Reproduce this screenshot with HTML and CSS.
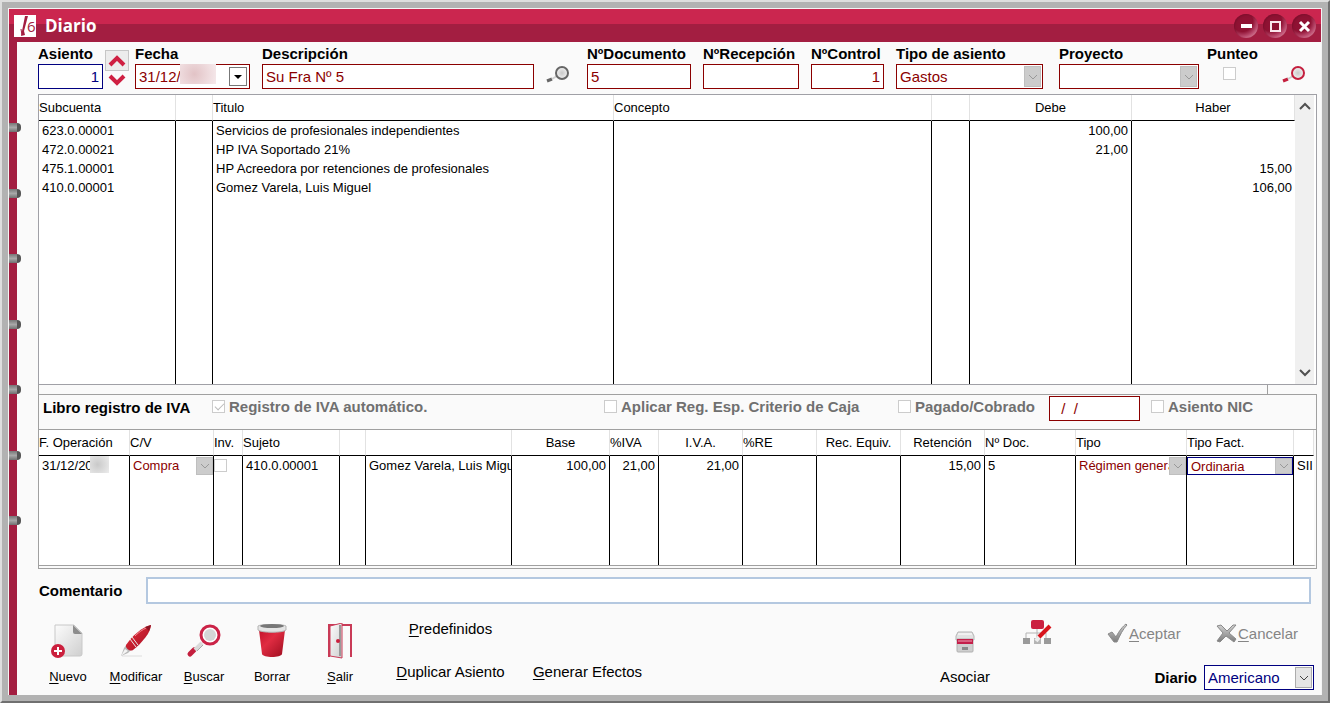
FILE: index.html
```html
<!DOCTYPE html>
<html lang="es">
<head>
    <meta charset="UTF-8">
    <meta name="viewport" content="width=device-width, initial-scale=1.0">
    <title>Diario</title>
    <link rel="stylesheet" href="styles.css">
</head>
<body>
    <!-- shared shapes -->
    <svg class="defs" width="0" height="0" aria-hidden="true">
        <defs>
            <linearGradient id="redGrad" x1="0" y1="0" x2="1" y2="1">
                <stop offset="0" stop-color="#e8303c"/>
                <stop offset="1" stop-color="#a30d22"/>
            </linearGradient>
            <linearGradient id="paperGrad" x1="0" y1="0" x2="1" y2="1">
                <stop offset="0" stop-color="#fcfcfc"/>
                <stop offset="1" stop-color="#cfcfcf"/>
            </linearGradient>
            <linearGradient id="binGrad" x1="0" y1="0" x2="1" y2="1">
                <stop offset="0" stop-color="#c2122a"/>
                <stop offset="0.4" stop-color="#e02c42"/>
                <stop offset="1" stop-color="#9c0c1e"/>
            </linearGradient>
            <linearGradient id="metalGrad" x1="0" y1="0" x2="0" y2="1">
                <stop offset="0" stop-color="#d0d0d0"/>
                <stop offset="1" stop-color="#7c7c7c"/>
            </linearGradient>
            <radialGradient id="lensGrad">
                <stop offset="0" stop-color="#c9c9c9"/>
                <stop offset="1" stop-color="#f2f2f2"/>
            </radialGradient>
            <symbol id="chevron" viewBox="0 0 10 6">
                <path d="M1 1l4 4 4-4" fill="none" stroke="currentColor"/>
            </symbol>
            <symbol id="lens" viewBox="0 0 24 20">
                <path d="M1 16l5-2" stroke="currentColor" stroke-width="3"/>
                <path d="M6 14l5-3" stroke="#cfcfcf" stroke-width="2"/>
                <circle cx="16" cy="8" r="6" fill="url(#lensGrad)" stroke="currentColor" stroke-width="2"/>
            </symbol>
        </defs>
    </svg>

    <div class="frame">
        <div class="window">
            <header class="titlebar">
                <svg class="logo" viewBox="0 0 22 22">
                    <rect width="22" height="22" fill="#fff"/>
                    <path d="M11 1h3L10 16l1 4-4 1 1-5z" fill="#a31e41"/>
                    <path d="M7 14l1 6" stroke="#a31e41"/>
                    <text x="13" y="17" class="logo-text">6</text>
                </svg>
                <h1>Diario</h1>
                <div class="window-buttons">
                    <button type="button" aria-label="Minimizar"><svg viewBox="0 0 24 24"><path d="M7 12h11" stroke="#fff" stroke-width="4"/></svg></button>
                    <button type="button" aria-label="Maximizar"><svg viewBox="0 0 24 24"><rect x="8" y="8" width="9" height="9" fill="none" stroke="#fbe6ec" stroke-width="2"/></svg></button>
                    <button type="button" aria-label="Cerrar"><svg viewBox="0 0 24 24"><path d="M8 8l9 9M17 8l-9 9" stroke="#fff" stroke-width="3"/></svg></button>
                </div>
            </header>

            <div class="body">
                <div class="rail">
                    <i></i><i></i><i></i><i></i><i></i><i></i><i></i>
                </div>

                <main class="content">
                    <div class="fields">
                        <div class="group">
                            <div class="number">
                                <div class="field w-asiento">
                                    <label for="asiento">Asiento</label>
                                    <input class="box blue right" id="asiento" type="text" value="1">
                                </div>
                                <div class="spin">
                                    <button type="button" class="up" aria-label="Siguiente"><svg viewBox="0 0 18 14"><path d="M2 11l7-7 7 7" fill="none" stroke="#cf2042" stroke-width="4"/></svg></button>
                                    <button type="button" aria-label="Anterior"><svg viewBox="0 0 18 14"><path d="M2 3l7 7 7-7" fill="none" stroke="#cf2042" stroke-width="4"/></svg></button>
                                </div>
                            </div>
                            <div class="field w-fecha">
                                <label for="fecha">Fecha</label>
                                <div class="date">
                                    <input class="box" id="fecha" type="text" value="31/12/">
                                    <span class="smudge pink"></span>
                                    <button type="button" aria-label="Calendario"><svg viewBox="0 0 8 4"><path d="M0 0h8l-4 4z"/></svg></button>
                                </div>
                            </div>
                        </div>
                        <div class="field grow">
                            <label for="descripcion">Descripción</label>
                            <input class="box" id="descripcion" type="text" value="Su Fra Nº 5">
                        </div>
                        <button type="button" class="lens-button" aria-label="Buscar descripción"><svg class="lens"><use href="#lens"/></svg></button>
                        <div class="field w-documento">
                            <label for="documento">NºDocumento</label>
                            <input class="box" id="documento" type="text" value="5">
                        </div>
                        <div class="field w-recepcion">
                            <label for="recepcion">NºRecepción</label>
                            <input class="box" id="recepcion" type="text">
                        </div>
                        <div class="field w-control">
                            <label for="control">NºControl</label>
                            <input class="box right" id="control" type="text" value="1">
                        </div>
                        <div class="field w-tipo">
                            <label for="tipo">Tipo de asiento</label>
                            <div class="combo">
                                <select class="box" id="tipo" disabled><option>Gastos</option></select>
                                <span class="arrow"><svg><use href="#chevron"/></svg></span>
                            </div>
                        </div>
                        <div class="group project">
                            <div class="field w-proyecto">
                                <label for="proyecto">Proyecto</label>
                                <div class="combo">
                                    <select class="box" id="proyecto" disabled><option></option></select>
                                    <span class="arrow"><svg><use href="#chevron"/></svg></span>
                                </div>
                            </div>
                            <div class="field w-punteo">
                                <label for="punteo">Punteo</label>
                                <input id="punteo" type="checkbox" disabled>
                            </div>
                        </div>
                        <button type="button" class="lens-button red" aria-label="Buscar asiento"><svg class="lens"><use href="#lens"/></svg></button>
                    </div>

                    <section class="entries">
                        <table class="grid">
                            <colgroup>
                                <col class="c137"><col class="c37"><col class="c401"><col><col class="c38"><col class="c162"><col class="c163">
                            </colgroup>
                            <thead>
                                <tr><th>Subcuenta</th><th></th><th>Titulo</th><th>Concepto</th><th></th><th class="center">Debe</th><th class="center">Haber</th></tr>
                            </thead>
                            <tbody>
                                <tr><td>623.0.00001</td><td></td><td>Servicios de profesionales independientes</td><td></td><td></td><td class="right">100,00</td><td></td></tr>
                                <tr><td>472.0.00021</td><td></td><td>HP IVA Soportado 21%</td><td></td><td></td><td class="right">21,00</td><td></td></tr>
                                <tr><td>475.1.00001</td><td></td><td>HP Acreedora por retenciones de profesionales</td><td></td><td></td><td></td><td class="right">15,00</td></tr>
                                <tr><td>410.0.00001</td><td></td><td>Gomez Varela, Luis Miguel</td><td></td><td></td><td></td><td class="right">106,00</td></tr>
                                <tr class="filler"><td></td><td></td><td></td><td></td><td></td><td></td><td></td></tr>
                            </tbody>
                        </table>
                        <div class="scrollbar">
                            <button type="button" aria-label="Subir"><svg viewBox="0 0 12 8"><path d="M1 7l5-5 5 5" fill="none" stroke="#505050" stroke-width="2"/></svg></button>
                            <button type="button" aria-label="Bajar"><svg viewBox="0 0 12 8"><path d="M1 1l5 5 5-5" fill="none" stroke="#505050" stroke-width="2"/></svg></button>
                        </div>
                    </section>
                    <div class="strip"></div>

                    <section class="vat">
                        <div class="vat-head">
                            <h2>Libro registro de IVA</h2>
                            <label><input type="checkbox" checked disabled>Registro de IVA automático.</label>
                            <label><input type="checkbox" disabled>Aplicar Reg. Esp. Criterio de Caja</label>
                            <label><input type="checkbox" disabled>Pagado/Cobrado</label>
                            <input class="box pay-date" type="text" value="  /  /" aria-label="Fecha de pago">
                            <label><input type="checkbox" disabled>Asiento NIC</label>
                        </div>
                        <table class="grid">
                            <colgroup>
                                <col class="c91"><col class="c84"><col class="c29"><col class="c97"><col class="c26"><col><col class="c98"><col class="c49"><col class="c84"><col class="c74"><col class="c84"><col class="c84"><col class="c91"><col class="c111"><col class="c107"><col class="c20">
                            </colgroup>
                            <thead>
                                <tr><th>F. Operación</th><th>C/V</th><th>Inv.</th><th>Sujeto</th><th></th><th></th><th class="center">Base</th><th>%IVA</th><th class="center">I.V.A.</th><th>%RE</th><th class="center">Rec. Equiv.</th><th class="center">Retención</th><th>Nº Doc.</th><th>Tipo</th><th>Tipo Fact.</th><th></th></tr>
                            </thead>
                            <tbody>
                                <tr>
                                    <td class="date-cell">31/12/20<span class="smudge"></span></td>
                                    <td class="control"><div class="combo"><select disabled aria-label="C/V"><option>Compra</option></select><span class="arrow"><svg><use href="#chevron"/></svg></span></div></td>
                                    <td class="control"><input type="checkbox" disabled aria-label="Inv."></td>
                                    <td>410.0.00001</td>
                                    <td></td>
                                    <td>Gomez Varela, Luis Miguel</td>
                                    <td class="right">100,00</td>
                                    <td class="right">21,00</td>
                                    <td class="right">21,00</td>
                                    <td></td>
                                    <td></td>
                                    <td class="right">15,00</td>
                                    <td>5</td>
                                    <td class="control"><div class="combo"><select disabled aria-label="Tipo"><option>Régimen general</option></select><span class="arrow"><svg><use href="#chevron"/></svg></span></div></td>
                                    <td class="control"><div class="combo focused"><select disabled aria-label="Tipo Fact."><option>Ordinaria</option></select><span class="arrow"><svg><use href="#chevron"/></svg></span></div></td>
                                    <td>SII</td>
                                </tr>
                                <tr class="filler"><td></td><td></td><td></td><td></td><td></td><td></td><td></td><td></td><td></td><td></td><td></td><td></td><td></td><td></td><td></td><td></td></tr>
                            </tbody>
                        </table>
                    </section>

                    <div class="comment">
                        <label for="comentario">Comentario</label>
                        <input id="comentario" type="text">
                    </div>

                    <footer class="footer">
                        <div class="tools">
                            <button type="button">
                                <svg viewBox="0 0 36 36">
                                    <path d="M5 2h19l8 8v21a2 2 0 0 1-2 2H7a2 2 0 0 1-2-2V4z" fill="url(#paperGrad)" stroke="#c8c8c8"/>
                                    <path d="M23 2l9 9h-7a2 2 0 0 1-2-2z" fill="#8c8c8c"/>
                                    <circle cx="8" cy="28" r="7" fill="#cb1f3d"/>
                                    <path d="M8 24v8M4 28h8" stroke="#fff" stroke-width="2"/>
                                </svg>
                                <span><u>N</u>uevo</span>
                            </button>
                            <button type="button">
                                <svg viewBox="0 0 36 36">
                                    <path d="M4 33h20" stroke="#dedede"/>
                                    <path d="M3 33l3-8 3-4 5 5-4 4z" fill="#b9b9b9"/>
                                    <path d="M3 33l4-7 3 2z" fill="#f4f4f4"/>
                                    <path d="M8 22C14 13 24 4 33 2c0 7-9 18-18 25-3 2-8-2-7-5z" fill="url(#redGrad)"/>
                                    <path d="M12 16l6 8M14 14l6 8" stroke="#eaeaea" stroke-width="1"/>
                                    <path d="M17 13C22 8 26 6 30 4" stroke="#f58d94" fill="none"/>
                                    <path d="M27 4l6-2-2 6z" fill="#8b1422"/>
                                </svg>
                                <span><u>M</u>odificar</span>
                            </button>
                            <button type="button">
                                <svg viewBox="0 0 36 36">
                                    <path d="M4 31l4-4" stroke="#c41f3e" stroke-width="5" stroke-linecap="round"/>
                                    <path d="M9 27l7-7" stroke="#dadada" stroke-width="4"/>
                                    <path d="M11 28l6-6" stroke="#aaa"/>
                                    <circle cx="24" cy="12" r="9" fill="#fff" stroke="#cb2347" stroke-width="3"/>
                                    <circle cx="24" cy="12" r="6" fill="#d4d6d6"/>
                                </svg>
                                <span><u>B</u>uscar</span>
                            </button>
                            <button type="button">
                                <svg viewBox="0 0 36 36">
                                    <path d="M5 7h26l-3 24c-1 4-19 4-20 0z" fill="url(#binGrad)"/>
                                    <path d="M4 3c2-2 26-2 28 0v4c-3 3-25 3-28 0z" fill="#e4e4e4" stroke="#b5b5b5"/>
                                    <ellipse cx="18" cy="3" rx="12" ry="2" fill="#777"/>
                                </svg>
                                <span>Borrar</span>
                            </button>
                            <button type="button">
                                <svg viewBox="0 0 36 36">
                                    <path d="M7 34V2h22v32" fill="#fafafa" stroke="#c93a57" stroke-width="2"/>
                                    <path d="M8 3l12-3v35l-12-2z" fill="url(#paperGrad)" stroke="#c93a57"/>
                                    <path d="M18 2v31" stroke="#999" stroke-width="2"/>
                                    <circle cx="16" cy="18" r="2" fill="#cb1f3d"/>
                                </svg>
                                <span><u>S</u>alir</span>
                            </button>
                        </div>

                        <div class="links">
                            <button type="button"><u>P</u>redefinidos</button>
                            <span></span>
                            <button type="button"><u>D</u>uplicar Asiento</button>
                            <button type="button"><u>G</u>enerar Efectos</button>
                        </div>

                        <div class="side-tools">
                            <button type="button">
                                <svg viewBox="0 0 20 22">
                                    <path d="M3 1h14l2 4v4H1V5z" fill="#e2e2e2" stroke="#b5b5b5"/>
                                    <path d="M3 3h14" stroke="#fff"/>
                                    <path d="M2 8h16v12a1 1 0 0 1-1 1H3a1 1 0 0 1-1-1z" fill="#cfcfcf" stroke="#b0b0b0"/>
                                    <rect x="2" y="8" width="16" height="5" fill="#c41f4a"/>
                                    <path d="M3 10h14" stroke="#eda3b5"/>
                                    <rect x="7" y="16" width="6" height="3" fill="#8a8a8a"/>
                                </svg>
                                <span>Asociar</span>
                            </button>
                            <button type="button" aria-label="Editar plan">
                                <svg viewBox="0 0 30 26">
                                    <path d="M4 19v-5h20v5M15 9v10" fill="none" stroke="#b4b4b4" stroke-width="1"/>
                                    <rect x="9" y="1" width="13" height="9" rx="2" fill="#cb2040"/>
                                    <rect x="1" y="19" width="7" height="6" fill="#9a9a9a"/>
                                    <rect x="12" y="19" width="7" height="6" fill="#b5b5b5"/>
                                    <rect x="22" y="19" width="7" height="6" fill="#9a9a9a"/>
                                    <path d="M14 22l4-5" stroke="#ededed" stroke-width="4"/>
                                    <path d="M17 18L28 7" stroke="#d8141c" stroke-width="4"/>
                                </svg>
                            </button>
                        </div>

                        <div class="actions">
                            <div class="confirm">
                                <button type="button" disabled>
                                    <svg viewBox="0 0 22 20"><path d="M1 11l4-2 4 5C12 8 16 3 19 1l1 1C16 6 13 12 10 19H7z" fill="url(#metalGrad)" stroke="#8a8a8a"/></svg>
                                    <span><u>A</u>ceptar</span>
                                </button>
                                <button type="button" disabled>
                                    <svg viewBox="0 0 22 20"><path d="M1 3l4-1 6 6 6-6 3 0-7 8 7 6-2 3-8-6-6 6-3-1 6-8z" fill="url(#metalGrad)" stroke="#8a8a8a"/></svg>
                                    <span><u>C</u>ancelar</span>
                                </button>
                            </div>
                            <div class="journal">
                                <label for="diario">Diario</label>
                                <div class="combo">
                                    <select class="box blue" id="diario"><option>Americano</option></select>
                                    <span class="arrow light"><svg><use href="#chevron"/></svg></span>
                                </div>
                            </div>
                        </div>
                    </footer>
                </main>
            </div>
        </div>
    </div>
</body>
</html>
```
FILE: styles.css
```css
* {
    box-sizing: border-box;
}
body {
    margin: 0;
    font-family: "Liberation Sans", Arial, sans-serif;
    font-size: 15px;
    color: #000;
    background: #b2b2b2;
}
button, input, select {
    font: inherit;
    color: inherit;
    margin: 0;
    padding: 0;
    border: none;
    border-radius: 0;
    background: none;
}
button {
    display: flex;
    align-items: center;
    justify-content: center;
}
h1, h2 {
    margin: 0;
}
u {
    text-underline-offset: 2px;
}
.defs {
    position: absolute;
}

/* window */
.frame {
    display: flex;
    min-height: 100vh;
    padding: 6px;
    border: 2px solid;
    border-color: #dedede #707070 #707070 #dedede;
    background: #b2b2b2;
}
.window {
    flex: 1;
    min-width: 0;
    display: flex;
    flex-direction: column;
    border: 1px solid #f4f4f4;
    border-bottom: none;
    background: #fafafa;
}
.titlebar {
    display: flex;
    align-items: center;
    height: 33px;
    padding: 0 5px;
    background: linear-gradient(#cb264f 15px, #a31e41 15px);
}
.logo {
    width: 22px;
    height: 22px;
}
.logo-text {
    font: 15px "Open Sans", sans-serif;
    fill: #a31e41;
}
.titlebar h1 {
    flex: 1;
    margin-left: 9px;
    font: bold 17px "Open Sans", sans-serif;
    color: #fff;
}
.window-buttons {
    display: flex;
    gap: 5px;
}
.window-buttons button {
    width: 24px;
    height: 24px;
    border-radius: 50%;
    background: radial-gradient(circle at 35% 30%, #8f1233 45%, #b8476a 65%, #eda9ba 95%);
    box-shadow: inset 1px 1px 2px #7d0f2c;
}
.window-buttons svg {
    width: 24px;
    height: 24px;
}
.body {
    flex: 1;
    display: flex;
}
.rail {
    width: 8px;
    display: flex;
    flex-direction: column;
    justify-content: space-between;
    padding: 81px 0 170px;
    background: #a31e41;
}
.rail i {
    width: 12px;
    height: 9px;
    border-radius: 0 4px 4px 0;
    border-right: 4px solid #555;
    background: linear-gradient(#777, #a8a8a8, #707070);
}
.content {
    flex: 1;
    min-width: 0;
    padding: 3px 4px 0 21px;
}

/* form controls */
.box {
    width: 100%;
    height: 25px;
    padding: 0 3px;
    border: 1px solid #8b0000;
    background: #fff;
    color: #8b0000;
}
.blue {
    border-color: #000080;
    color: #000080;
}
.right {
    text-align: right;
}
.center {
    text-align: center;
}
select {
    appearance: none;
    width: 100%;
    opacity: 1;
}
input[type="checkbox"] {
    appearance: none;
    position: relative;
    width: 13px;
    height: 13px;
    border: 1px solid #ccc;
    background: #fff;
}
input[type="checkbox"]:checked::after {
    content: "";
    position: absolute;
    left: 2px;
    top: 2px;
    width: 8px;
    height: 4px;
    border: solid #bbb;
    border-width: 0 0 1px 1px;
    transform: rotate(-45deg);
}
.combo {
    position: relative;
}
.arrow {
    position: absolute;
    top: 2px;
    right: 2px;
    bottom: 2px;
    width: 17px;
    display: flex;
    align-items: center;
    justify-content: center;
    border: 1px solid #bfbfbf;
    background: #ccc;
    color: #999;
    pointer-events: none;
}
.arrow.light {
    border-color: #acacac;
    background: #e5e5e5;
    color: #444;
}
.arrow svg {
    width: 10px;
    height: 6px;
}

/* entry fields */
.fields {
    display: flex;
    align-items: flex-end;
    gap: 12px;
    margin-bottom: 5px;
}
.field label {
    display: block;
    height: 19px;
    line-height: 18px;
    font-weight: bold;
    white-space: nowrap;
}
.field .box {
    display: block;
}
.group {
    display: flex;
    gap: 6px;
}
.group.project {
    gap: 8px;
}
.number {
    display: flex;
    align-items: flex-end;
    gap: 2px;
}
.grow {
    flex: 1;
}
.w-asiento { width: 65px; }
.w-fecha { width: 115px; }
.w-documento { width: 104px; }
.w-recepcion { width: 96px; }
.w-control { width: 73px; }
.w-tipo { width: 151px; padding-right: 4px; }
.w-proyecto { width: 140px; }
.w-punteo { width: 51px; }
.w-punteo input {
    display: block;
    margin: 3px 16px 9px;
}
.spin {
    width: 24px;
}
.spin button {
    width: 24px;
    height: 18px;
}
.spin .up {
    height: 21px;
    border: 1px solid #c6c6c6;
    background: #ececec;
}
.spin svg {
    width: 18px;
    height: 14px;
}
.date {
    position: relative;
}
.date button {
    position: absolute;
    right: 3px;
    top: 3px;
    width: 18px;
    height: 19px;
    border: 1px solid #777;
    background: #fff;
}
.date svg {
    width: 8px;
    height: 4px;
}
.smudge {
    position: absolute;
    left: 51px;
    top: 0;
    width: 19px;
    height: 17px;
    background: radial-gradient(circle at 40% 50%, #c9c9c9, #ececec);
}
.smudge.pink {
    left: 45px;
    width: 36px;
    height: 20px;
    background: radial-gradient(circle at 40% 50%, #e2c3c6, #f6eaec);
}
.lens-button {
    width: 29px;
    height: 29px;
    justify-content: flex-start;
    color: #666;
}
.lens-button.red {
    width: 47px;
    justify-content: center;
    color: #c41f3e;
}
.lens {
    width: 24px;
    height: 20px;
}

/* grids */
.grid {
    flex: 1;
    width: 100%;
    table-layout: fixed;
    border-collapse: separate;
    border-spacing: 0;
    background: #fff;
    font-size: 13px;
}
.grid th, .grid td {
    height: 19px;
    padding: 0 3px;
    border-right: 1px solid #000;
    text-align: left;
    line-height: 18px;
    white-space: nowrap;
    overflow: hidden;
}
.grid th {
    height: 26px;
    padding: 0;
    border-right-color: #e2e2e2;
    border-bottom: 1px solid #000;
    font-weight: normal;
}
.grid td:last-child {
    border-right: none;
}
.grid .right {
    text-align: right;
}
.grid .center {
    text-align: center;
}
.grid .filler td {
    height: auto;
}
.c20 { width: 20px; }
.c26 { width: 26px; }
.c29 { width: 29px; }
.c37 { width: 37px; }
.c38 { width: 38px; }
.c49 { width: 49px; }
.c74 { width: 74px; }
.c84 { width: 84px; }
.c91 { width: 91px; }
.c97 { width: 97px; }
.c98 { width: 98px; }
.c107 { width: 107px; }
.c111 { width: 111px; }
.c137 { width: 137px; }
.c162 { width: 162px; }
.c163 { width: 163px; }
.c401 { width: 401px; }

.entries {
    display: flex;
    border: 1px solid #a0a0a6;
    background: #fff;
}
.entries .grid {
    height: 289px;
}
.scrollbar {
    width: 21px;
    display: flex;
    flex-direction: column;
    justify-content: space-between;
    border-right: 2px solid #fff;
    background: #f0f0f0;
}
.scrollbar button {
    height: 22px;
}
.scrollbar svg {
    width: 12px;
    height: 8px;
}
.strip {
    height: 9px;
    margin-right: 49px;
    border: solid #a0a0a0;
    border-width: 0 1px;
}

/* VAT book */
.vat {
    padding-bottom: 2px;
    border: 1px solid #a0a0a0;
}
.vat-head {
    display: grid;
    grid-template-columns: 169px 1fr 294px 151px 102px 165px;
    align-items: start;
    height: 35px;
    padding: 1px 0 0 4px;
    border-bottom: 1px solid #a0a0a0;
}
.vat-head h2 {
    font-size: 15px;
    line-height: 23px;
}
.vat-head label {
    display: flex;
    align-items: center;
    gap: 4px;
    line-height: 21px;
    font-weight: bold;
    color: #707070;
}
.pay-date {
    width: 91px;
    white-space: pre;
}
.vat .grid {
    height: 136px;
    border-bottom: 1px solid #a0a0a0;
    border-right: 2px solid #fafafa;
}
.grid .date-cell {
    position: relative;
}
.grid .control {
    padding: 0;
    color: #8b0000;
}
.grid .control select, .grid .control input {
    display: block;
}
.grid .control select {
    height: 18px;
    padding: 0 17px 0 3px;
}
.grid .control .arrow {
    top: 0;
    right: 0;
    bottom: 0;
}
.grid .focused {
    border: 1px solid #000080;
}
.grid .focused select {
    height: 16px;
}

/* comment */
.comment {
    display: flex;
    align-items: center;
    padding: 8px 6px 0 1px;
}
.comment label {
    width: 107px;
    font-weight: bold;
}
.comment input {
    flex: 1;
    height: 27px;
    padding: 0 4px;
    border: 2px solid #b4c8e0;
    background: #fff;
}

/* footer */
.footer {
    display: flex;
    align-items: flex-start;
    padding: 15px 3px 0 0;
}
.tools {
    display: flex;
    margin-left: -4px;
    padding-top: 4px;
}
.tools button {
    width: 68px;
    flex-direction: column;
    gap: 9px;
    font-size: 13px;
    line-height: 18px;
}
.tools svg {
    width: 36px;
    height: 36px;
}
.links {
    display: grid;
    grid-template-columns: 137px 137px;
    gap: 25px 0;
    margin-left: 8px;
}
.links button {
    height: 18px;
}
.side-tools {
    display: flex;
    align-items: flex-start;
    margin-left: auto;
}
.side-tools button {
    width: 72px;
    flex-direction: column;
    gap: 15px;
    line-height: 18px;
}
.side-tools button:first-child {
    padding-top: 12px;
}
.side-tools button:first-child svg {
    width: 20px;
    height: 22px;
}
.side-tools svg {
    width: 30px;
    height: 26px;
}
.actions {
    margin-left: 34px;
}
.confirm {
    display: flex;
    justify-content: space-between;
    width: 207px;
    height: 46px;
    padding: 4px 16px 0 0;
}
.confirm button {
    height: 20px;
    color: #858585;
}
.confirm svg {
    width: 22px;
    height: 20px;
}
.journal {
    display: flex;
    align-items: center;
    justify-content: flex-end;
    gap: 7px;
}
.journal label {
    font-weight: bold;
}
.journal .combo {
    width: 110px;
}
```
